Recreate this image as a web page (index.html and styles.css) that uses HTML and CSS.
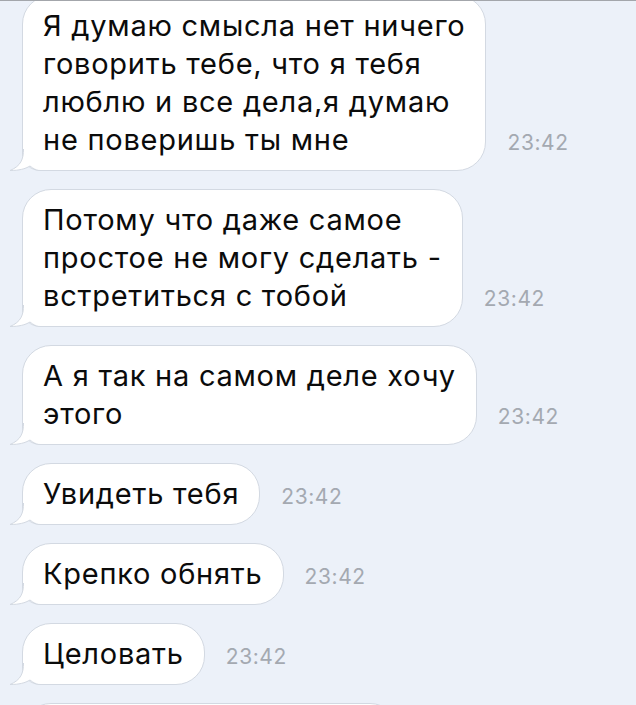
FILE: index.html
```
<!DOCTYPE html>
<html lang="ru">
<head>
  <meta charset="UTF-8">
  <title>Сообщения</title>
  <link rel="stylesheet" href="styles.css">
</head>
<body>

  <div class="topline"></div>

  <div class="chat">
    <div class="row">
      <div class="bubble">Я думаю смысла нет ничего<br>говорить тебе, что я тебя<br>люблю и все дела,я думаю<br>не поверишь ты мне</div>
      <span class="time">23:42</span>
    </div>
    <div class="row">
      <div class="bubble">Потому что даже самое<br>простое не могу сделать -<br>встретиться с тобой</div>
      <span class="time">23:42</span>
    </div>
    <div class="row">
      <div class="bubble">А я так на самом деле хочу<br>этого</div>
      <span class="time">23:42</span>
    </div>
    <div class="row">
      <div class="bubble">Увидеть тебя</div>
      <span class="time">23:42</span>
    </div>
    <div class="row">
      <div class="bubble">Крепко обнять</div>
      <span class="time">23:42</span>
    </div>
    <div class="row">
      <div class="bubble">Целовать</div>
      <span class="time">23:42</span>
    </div>
    <div class="row">
      <div class="bubble wide">&nbsp;</div>
    </div>
  </div>

</body>
</html>
```

FILE: styles.css
```
body {
  margin: 0;
  background-color: #ecf1f9;
  font-family: Inter, "Noto Sans", sans-serif;
  height: 705px;
  overflow: hidden;
}

.topline {
  position: relative;
  z-index: 2;
  height: 1px;
  background-color: #a3a6ab;
}

.chat {
  margin-top: -6px;
  padding-left: 22px;
  display: flex;
  flex-direction: column;
  gap: 18px;
}

.row {
  display: flex;
  align-items: flex-end;
  gap: 21px;
}

.bubble {
  position: relative;
  background-color: #fff;
  border: 1px solid #d3d9e2;
  border-radius: 29px;
  border-bottom-left-radius: 18px;
  padding: 11px 20px;
  font-size: 29px;
  line-height: 38px;
  letter-spacing: 0.75px;
  color: #0b0b0b;
}

/* хвостик снизу слева */
.bubble::before {
  content: "";
  position: absolute;
  left: -14px;
  bottom: -1px;
  width: 30px;
  height: 22px;
  background: url("data:image/svg+xml;utf8,<svg xmlns='http://www.w3.org/2000/svg' width='30' height='22' viewBox='0 0 30 22'><path d='M14.5 0 C14.5 10 12 17 1 21.5 C10 21.5 16 20 21 17 C24 19.5 27 21 30 21.5 L30 0 Z' fill='%23fff'/><path d='M14.5 0 C14.5 10 12 17 1 21.5 C10 21.5 16 20 21 17 C24 19.5 27 21 30 21.5' fill='none' stroke='%23d3d9e2' stroke-width='1'/></svg>") no-repeat;
}

.wide {
  width: 335px;
}

.time {
  font-size: 21px;
  line-height: 20px;
  color: #a4a9b1;
  padding-bottom: 18px;
  letter-spacing: 0.6px;
}
```
